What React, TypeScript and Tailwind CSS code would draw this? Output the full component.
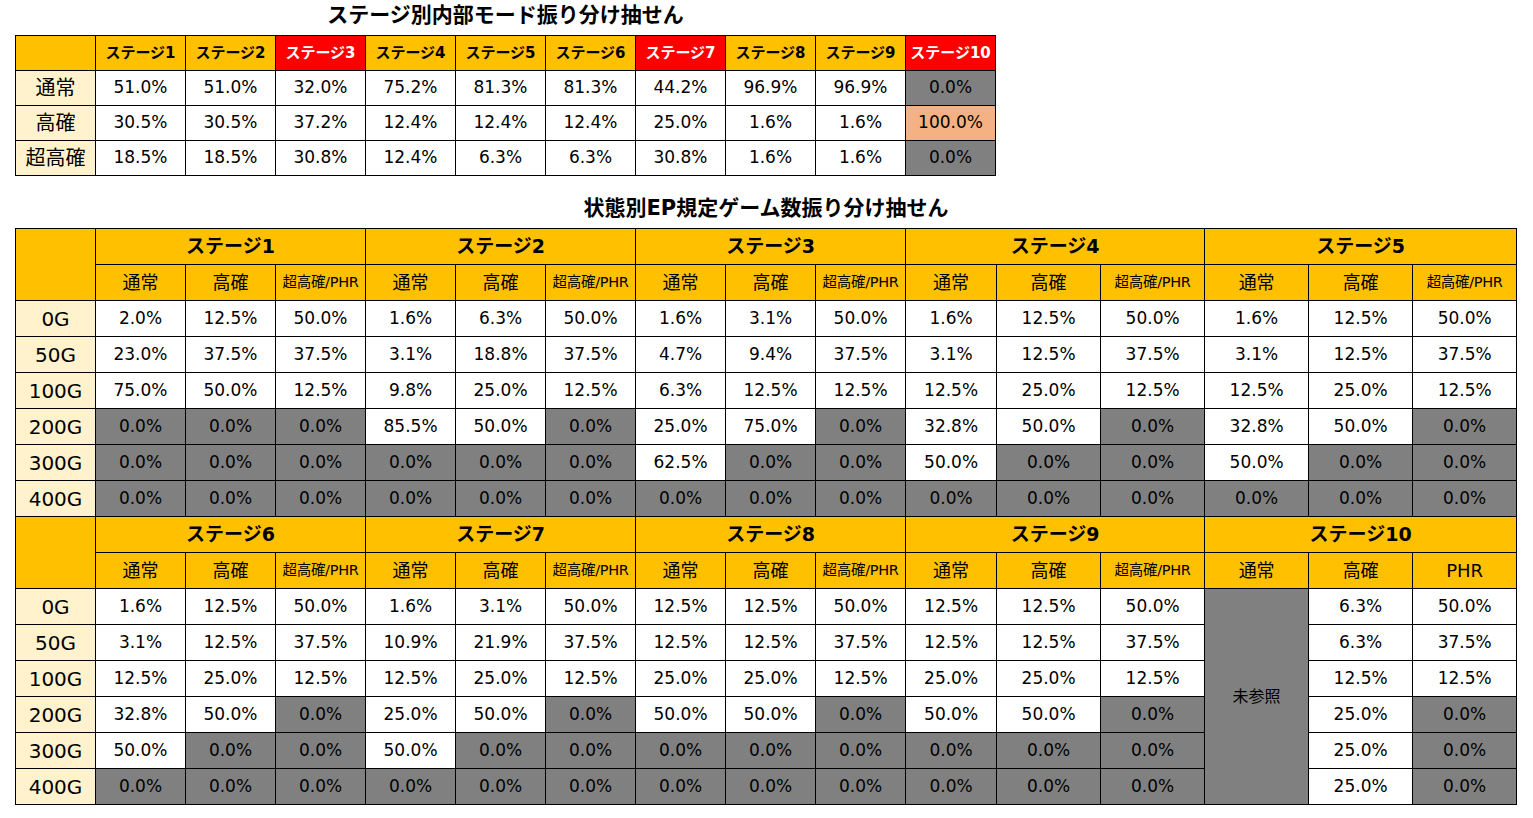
import React from 'react';

const modeStages = ['ステージ1', 'ステージ2', 'ステージ3', 'ステージ4', 'ステージ5', 'ステージ6', 'ステージ7', 'ステージ8', 'ステージ9', 'ステージ10'];
const redStages = ['ステージ3', 'ステージ7', 'ステージ10'];

const modeRows = [
  { label: '通常', values: ['51.0', '51.0', '32.0', '75.2', '81.3', '81.3', '44.2', '96.9', '96.9', '0.0'] },
  { label: '高確', values: ['30.5', '30.5', '37.2', '12.4', '12.4', '12.4', '25.0', '1.6', '1.6', '100.0'] },
  { label: '超高確', values: ['18.5', '18.5', '30.8', '12.4', '6.3', '6.3', '30.8', '1.6', '1.6', '0.0'] },
];

const games = ['0G', '50G', '100G', '200G', '300G', '400G'];

const block1 = [
  ['2.0', '12.5', '50.0', '1.6', '6.3', '50.0', '1.6', '3.1', '50.0', '1.6', '12.5', '50.0', '1.6', '12.5', '50.0'],
  ['23.0', '37.5', '37.5', '3.1', '18.8', '37.5', '4.7', '9.4', '37.5', '3.1', '12.5', '37.5', '3.1', '12.5', '37.5'],
  ['75.0', '50.0', '12.5', '9.8', '25.0', '12.5', '6.3', '12.5', '12.5', '12.5', '25.0', '12.5', '12.5', '25.0', '12.5'],
  ['0.0', '0.0', '0.0', '85.5', '50.0', '0.0', '25.0', '75.0', '0.0', '32.8', '50.0', '0.0', '32.8', '50.0', '0.0'],
  ['0.0', '0.0', '0.0', '0.0', '0.0', '0.0', '62.5', '0.0', '0.0', '50.0', '0.0', '0.0', '50.0', '0.0', '0.0'],
  ['0.0', '0.0', '0.0', '0.0', '0.0', '0.0', '0.0', '0.0', '0.0', '0.0', '0.0', '0.0', '0.0', '0.0', '0.0'],
];

// stage 10 通常 column is the merged 未参照 cell, so 14 values per row
const block2 = [
  ['1.6', '12.5', '50.0', '1.6', '3.1', '50.0', '12.5', '12.5', '50.0', '12.5', '12.5', '50.0', '6.3', '50.0'],
  ['3.1', '12.5', '37.5', '10.9', '21.9', '37.5', '12.5', '12.5', '37.5', '12.5', '12.5', '37.5', '6.3', '37.5'],
  ['12.5', '25.0', '12.5', '12.5', '25.0', '12.5', '25.0', '25.0', '12.5', '25.0', '25.0', '12.5', '12.5', '12.5'],
  ['32.8', '50.0', '0.0', '25.0', '50.0', '0.0', '50.0', '50.0', '0.0', '50.0', '50.0', '0.0', '25.0', '0.0'],
  ['50.0', '0.0', '0.0', '50.0', '0.0', '0.0', '0.0', '0.0', '0.0', '0.0', '0.0', '0.0', '25.0', '0.0'],
  ['0.0', '0.0', '0.0', '0.0', '0.0', '0.0', '0.0', '0.0', '0.0', '0.0', '0.0', '0.0', '25.0', '0.0'],
];

const bd = 'border border-black text-center p-0';

const ValueCell = ({ v, salmon }: { v: string; salmon?: boolean }) => {
  const bg = v === '0.0' ? 'bg-[#808080]' : salmon ? 'bg-[#f4b183]' : 'bg-white';
  return <td className={`${bd} ${bg} text-[17px] text-black`}>{v}%</td>;
};

const EpCols = () => (
  <colgroup>
    <col className="w-[80px]" />
    {Array.from({ length: 9 }).map((_, i) => (
      <col key={i} className="w-[90px]" />
    ))}
    <col className="w-[91px]" />
    {Array.from({ length: 5 }).map((_, i) => (
      <col key={'b' + i} className="w-[104px]" />
    ))}
  </colgroup>
);

const SubHead = ({ last }: { last?: boolean }) => (
  <>
    <td className={`${bd} bg-[#ffc000] text-[18px]`}>通常</td>
    <td className={`${bd} bg-[#ffc000] text-[18px]`}>高確</td>
    {last ? (
      <td className={`${bd} bg-[#ffc000] text-[18px]`}>PHR</td>
    ) : (
      <td className={`${bd} bg-[#ffc000] text-[14.5px] tracking-[-0.3px] whitespace-nowrap`}>超高確/PHR</td>
    )}
  </>
);

export default function App() {
  return (
    <div className="bg-white min-h-screen pl-[15px] text-black font-['DejaVu_Sans','Noto_Sans_CJK_JP',sans-serif]">
      <div className="w-[981px]">
        <div className="h-[35px] leading-[30px] text-center text-[21px] font-bold">ステージ別内部モード振り分け抽せん</div>
        <table className="table-fixed border-collapse w-[981px]">
          <colgroup>
            <col className="w-[80px]" />
            {modeStages.map((s) => (
              <col key={s} className="w-[90px]" />
            ))}
          </colgroup>
          <tbody>
            <tr className="h-[35px]">
              <td className={`${bd} bg-[#ffc000]`}></td>
              {modeStages.map((s) => (
                <td
                  key={s}
                  className={`${bd} text-[15px] font-bold ${redStages.includes(s) ? 'bg-[#ff0000] text-white' : 'bg-[#ffc000]'}`}
                >
                  {s}
                </td>
              ))}
            </tr>
            {modeRows.map((r) => (
              <tr key={r.label} className="h-[35px]">
                <td className={`${bd} bg-[#fff2cc] text-[20px]`}>{r.label}</td>
                {r.values.map((v, i) => (
                  <ValueCell key={i} v={v} salmon={v === '100.0'} />
                ))}
              </tr>
            ))}
          </tbody>
        </table>
      </div>

      <div className="w-[1502px] mt-[17px]">
        <div className="h-[35px] leading-[30px] text-center text-[21px] font-bold">状態別EP規定ゲーム数振り分け抽せん</div>
        <table className="table-fixed border-collapse w-[1502px]">
          <EpCols />
          <tbody>
            <tr className="h-[36px]">
              <td rowSpan={2} className={`${bd} bg-[#ffc000]`}></td>
              {['ステージ1', 'ステージ2', 'ステージ3', 'ステージ4', 'ステージ5'].map((s) => (
                <td key={s} colSpan={3} className={`${bd} bg-[#ffc000] text-[19px] font-bold`}>
                  {s}
                </td>
              ))}
            </tr>
            <tr className="h-[36px]">
              {[0, 1, 2, 3, 4].map((i) => (
                <SubHead key={i} />
              ))}
            </tr>
            {games.map((g, ri) => (
              <tr key={g} className="h-[36px]">
                <td className={`${bd} bg-[#fff2cc] text-[20px]`}>{g}</td>
                {block1[ri].map((v, i) => (
                  <ValueCell key={i} v={v} />
                ))}
              </tr>
            ))}

            <tr className="h-[36px]">
              <td rowSpan={2} className={`${bd} bg-[#ffc000]`}></td>
              {['ステージ6', 'ステージ7', 'ステージ8', 'ステージ9', 'ステージ10'].map((s) => (
                <td key={s} colSpan={3} className={`${bd} bg-[#ffc000] text-[19px] font-bold`}>
                  {s}
                </td>
              ))}
            </tr>
            <tr className="h-[36px]">
              {[0, 1, 2, 3].map((i) => (
                <SubHead key={i} />
              ))}
              <SubHead last />
            </tr>
            {games.map((g, ri) => (
              <tr key={'b' + g} className="h-[36px]">
                <td className={`${bd} bg-[#fff2cc] text-[20px]`}>{g}</td>
                {block2[ri].slice(0, 12).map((v, i) => (
                  <ValueCell key={i} v={v} />
                ))}
                {ri === 0 && (
                  <td rowSpan={6} className={`${bd} bg-[#808080] text-[16px]`}>
                    未参照
                  </td>
                )}
                {block2[ri].slice(12).map((v, i) => (
                  <ValueCell key={'x' + i} v={v} />
                ))}
              </tr>
            ))}
          </tbody>
        </table>
      </div>
    </div>
  );
}
